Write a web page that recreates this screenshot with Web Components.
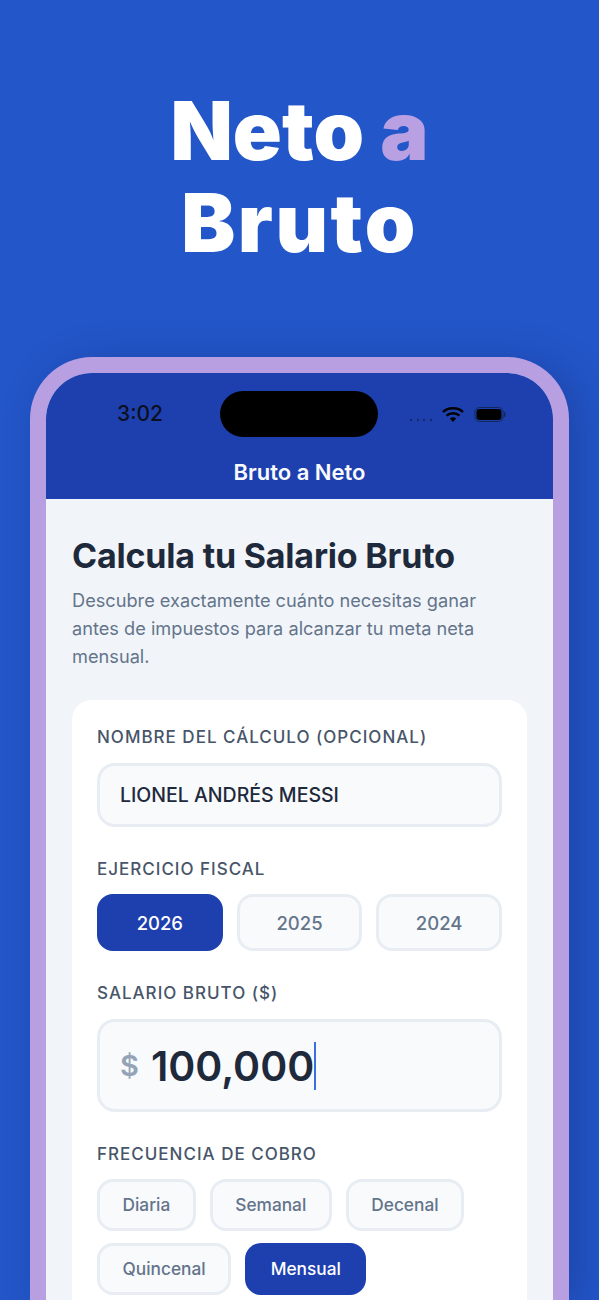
<!DOCTYPE html>
<html lang="es">
<head>
<meta charset="utf-8">
<title>Neto a Bruto</title>
<style>
  html, body { margin: 0; height: 1300px; overflow: hidden; background: #2356c8; font-family: Inter, "Liberation Sans", sans-serif; }
</style>
</head>
<body>
<promo-screen>
  <phone-frame>
    <status-bar slot="top"></status-bar>
    <form-card>
      <form-field label="NOMBRE DEL CÁLCULO (OPCIONAL)" gap="15"><text-box>LIONEL ANDRÉS MESSI</text-box></form-field>
      <form-field label="EJERCICIO FISCAL" gap="14">
        <choice-row equal>
          <choice-pill active tall>2026</choice-pill>
          <choice-pill tall>2025</choice-pill>
          <choice-pill tall>2024</choice-pill>
        </choice-row>
      </form-field>
      <form-field label="SALARIO BRUTO ($)" gap="15"><money-box>100,000</money-box></form-field>
      <form-field label="FRECUENCIA DE COBRO" gap="14">
        <choice-row>
          <choice-pill>Diaria</choice-pill>
          <choice-pill>Semanal</choice-pill>
          <choice-pill>Decenal</choice-pill>
          <choice-pill>Quincenal</choice-pill>
          <choice-pill active>Mensual</choice-pill>
        </choice-row>
      </form-field>
    </form-card>
  </phone-frame>
</promo-screen>
<script>
function define(name, html, attrs) {
  customElements.define(name, class extends HTMLElement {
    constructor() {
      super();
      this.attachShadow({ mode: "open" }).innerHTML = html;
    }
    connectedCallback() {
      if (attrs) attrs(this);
    }
  });
}

define("promo-screen", `
  <style>
    :host { display: block; width: 599px; height: 1300px; overflow: hidden; }
    h1 { margin: 0; padding-top: 85px; height: 357px; box-sizing: border-box; text-align: center;
         font: 900 81px/92px Inter, sans-serif; color: #fff; }
    span { color: #b9a0e3; }
    b { font-weight: inherit; letter-spacing: 2.5px; }
  </style>
  <h1>Neto <span>a</span><br><b>Bruto</b></h1>
  <slot></slot>
`);

define("phone-frame", `
  <style>
    :host { display: block; margin: 0 30px; border: 16px solid #b79fe2; border-bottom: 0;
            border-radius: 62px 62px 0 0; height: 943px; box-sizing: border-box;
            box-shadow: 12px 4px 36px rgba(20, 40, 120, .35); overflow: hidden; background: #f1f5f9; }
    main { padding: 37px 26px 0; }
    h2 { margin: 0; font: 700 34px/40px Inter, sans-serif; color: #1e293b; letter-spacing: -0.2px; }
    p { margin: 10px 0 0; font: 400 18.2px/28px Inter, sans-serif; color: #64748b; }
    .card { margin-top: 30px; }
  </style>
  <slot name="top"></slot>
  <main>
    <h2>Calcula tu Salario Bruto</h2>
    <p>Descubre exactamente cuánto necesitas ganar<br>antes de impuestos para alcanzar tu meta neta<br>mensual.</p>
    <div class="card"><slot></slot></div>
  </main>
`);

define("status-bar", `
  <style>
    :host { display: block; height: 126px; background: #1e40af; }
    .row { display: flex; align-items: flex-start; height: 86px; }
    .time { width: 174px; padding: 29px 0 0 71px; box-sizing: border-box; font: 500 21px/24px Inter, sans-serif; color: #0b1020; }
    .island { width: 158px; height: 46px; margin-top: 18px; background: #000; border-radius: 23px; }
    .icons { display: flex; align-items: center; margin: 30px 0 0 31px; }
    .title { text-align: center; font: 600 22px/26px Inter, sans-serif; color: #f8fafc; }
  </style>
  <div class="row">
    <div class="time">3:02</div>
    <div class="island"></div>
    <div class="icons">
      <svg width="100" height="24" viewBox="0 0 100 24">
        <g fill="#15296f"><circle cx="2" cy="17" r="1.2"/><circle cx="9" cy="17" r="1.2"/><circle cx="15" cy="17" r="1.2"/><circle cx="22" cy="17" r="1.2"/></g>
        <g fill="none" stroke="#000" stroke-width="2.4">
          <path d="M34 9 C39 4 49 4 54 9"/>
          <path d="M37.5 12.6 C41 9.5 47 9.5 50.5 12.6"/>
        </g>
        <path d="M40.8 15.4 C43 13.8 45 13.8 47.2 15.4 L44 19 Z" fill="#000"/>
        <rect x="66" y="4.5" width="28" height="14" rx="4.5" fill="none" stroke="#13275f"/>
        <rect x="67.5" y="6" width="25" height="11" rx="3.2" fill="#000"/>
        <rect x="95" y="9" width="1.5" height="5" rx=".7" fill="#13275f"/>
      </svg>
    </div>
  </div>
  <div class="title">Bruto a Neto</div>
`);

define("form-card", `
  <style>
    :host { display: block; background: #fff; border-radius: 20px 20px 0 0; padding: 25px 25px 40px; }
    .stack { display: flex; flex-direction: column; gap: 30px; }
  </style>
  <div class="stack"><slot></slot></div>
`);

define("form-field", `
  <style>
    :host { display: block; }
    label { display: block; padding-top: 1px; font: 550 17px/22px Inter, sans-serif; letter-spacing: 1px; color: #475569; }
  </style>
  <label></label>
  <slot></slot>
`, (el) => {
  const label = el.shadowRoot.querySelector("label");
  label.textContent = el.getAttribute("label");
  label.style.marginBottom = el.getAttribute("gap") + "px";
});

define("text-box", `
  <style>
    :host { display: flex; align-items: center; height: 64px; box-sizing: border-box; padding: 0 20px;
            background: #f8fafc; border: 3px solid #e8edf3; border-radius: 18px;
            font: 500 19.5px/24px Inter, sans-serif; color: #1e293b; }
  </style>
  <slot></slot>
`);

define("money-box", `
  <style>
    :host { display: flex; align-items: center; height: 93px; box-sizing: border-box; padding: 0 20px;
            background: #f8fafc; border: 3px solid #e8edf3; border-radius: 18px; }
    .cur { font: 600 29px/36px Inter, sans-serif; color: #94a3b8; margin-right: 12px; }
    .val { font: 600 41px/48px Inter, sans-serif; color: #1e293b; }
    .caret { width: 2px; height: 48px; background: #3b6fe0; }
  </style>
  <span class="cur">$</span><span class="val"><slot></slot></span><span class="caret"></span>
`);

define("choice-row", `
  <style>
    :host { display: flex; flex-wrap: wrap; gap: 12px 14px; }
    :host([equal]) { display: grid; grid-template-columns: repeat(3, 1fr); }
  </style>
  <slot></slot>
`);

define("choice-pill", `
  <style>
    :host { display: flex; align-items: center; justify-content: center; height: 52px; box-sizing: border-box;
            padding: 0 22.5px; background: #f8fafc; border: 3px solid #e8edf3; border-radius: 16px;
            font: 500 17.3px/22px Inter, sans-serif; color: #64748b; }
    :host([tall]) { height: 57px; font-size: 18.5px; }
    :host([active]) { background: #1e40af; border-color: #1e40af; color: #fff; }
  </style>
  <slot></slot>
`);
</script>
</body>
</html>
